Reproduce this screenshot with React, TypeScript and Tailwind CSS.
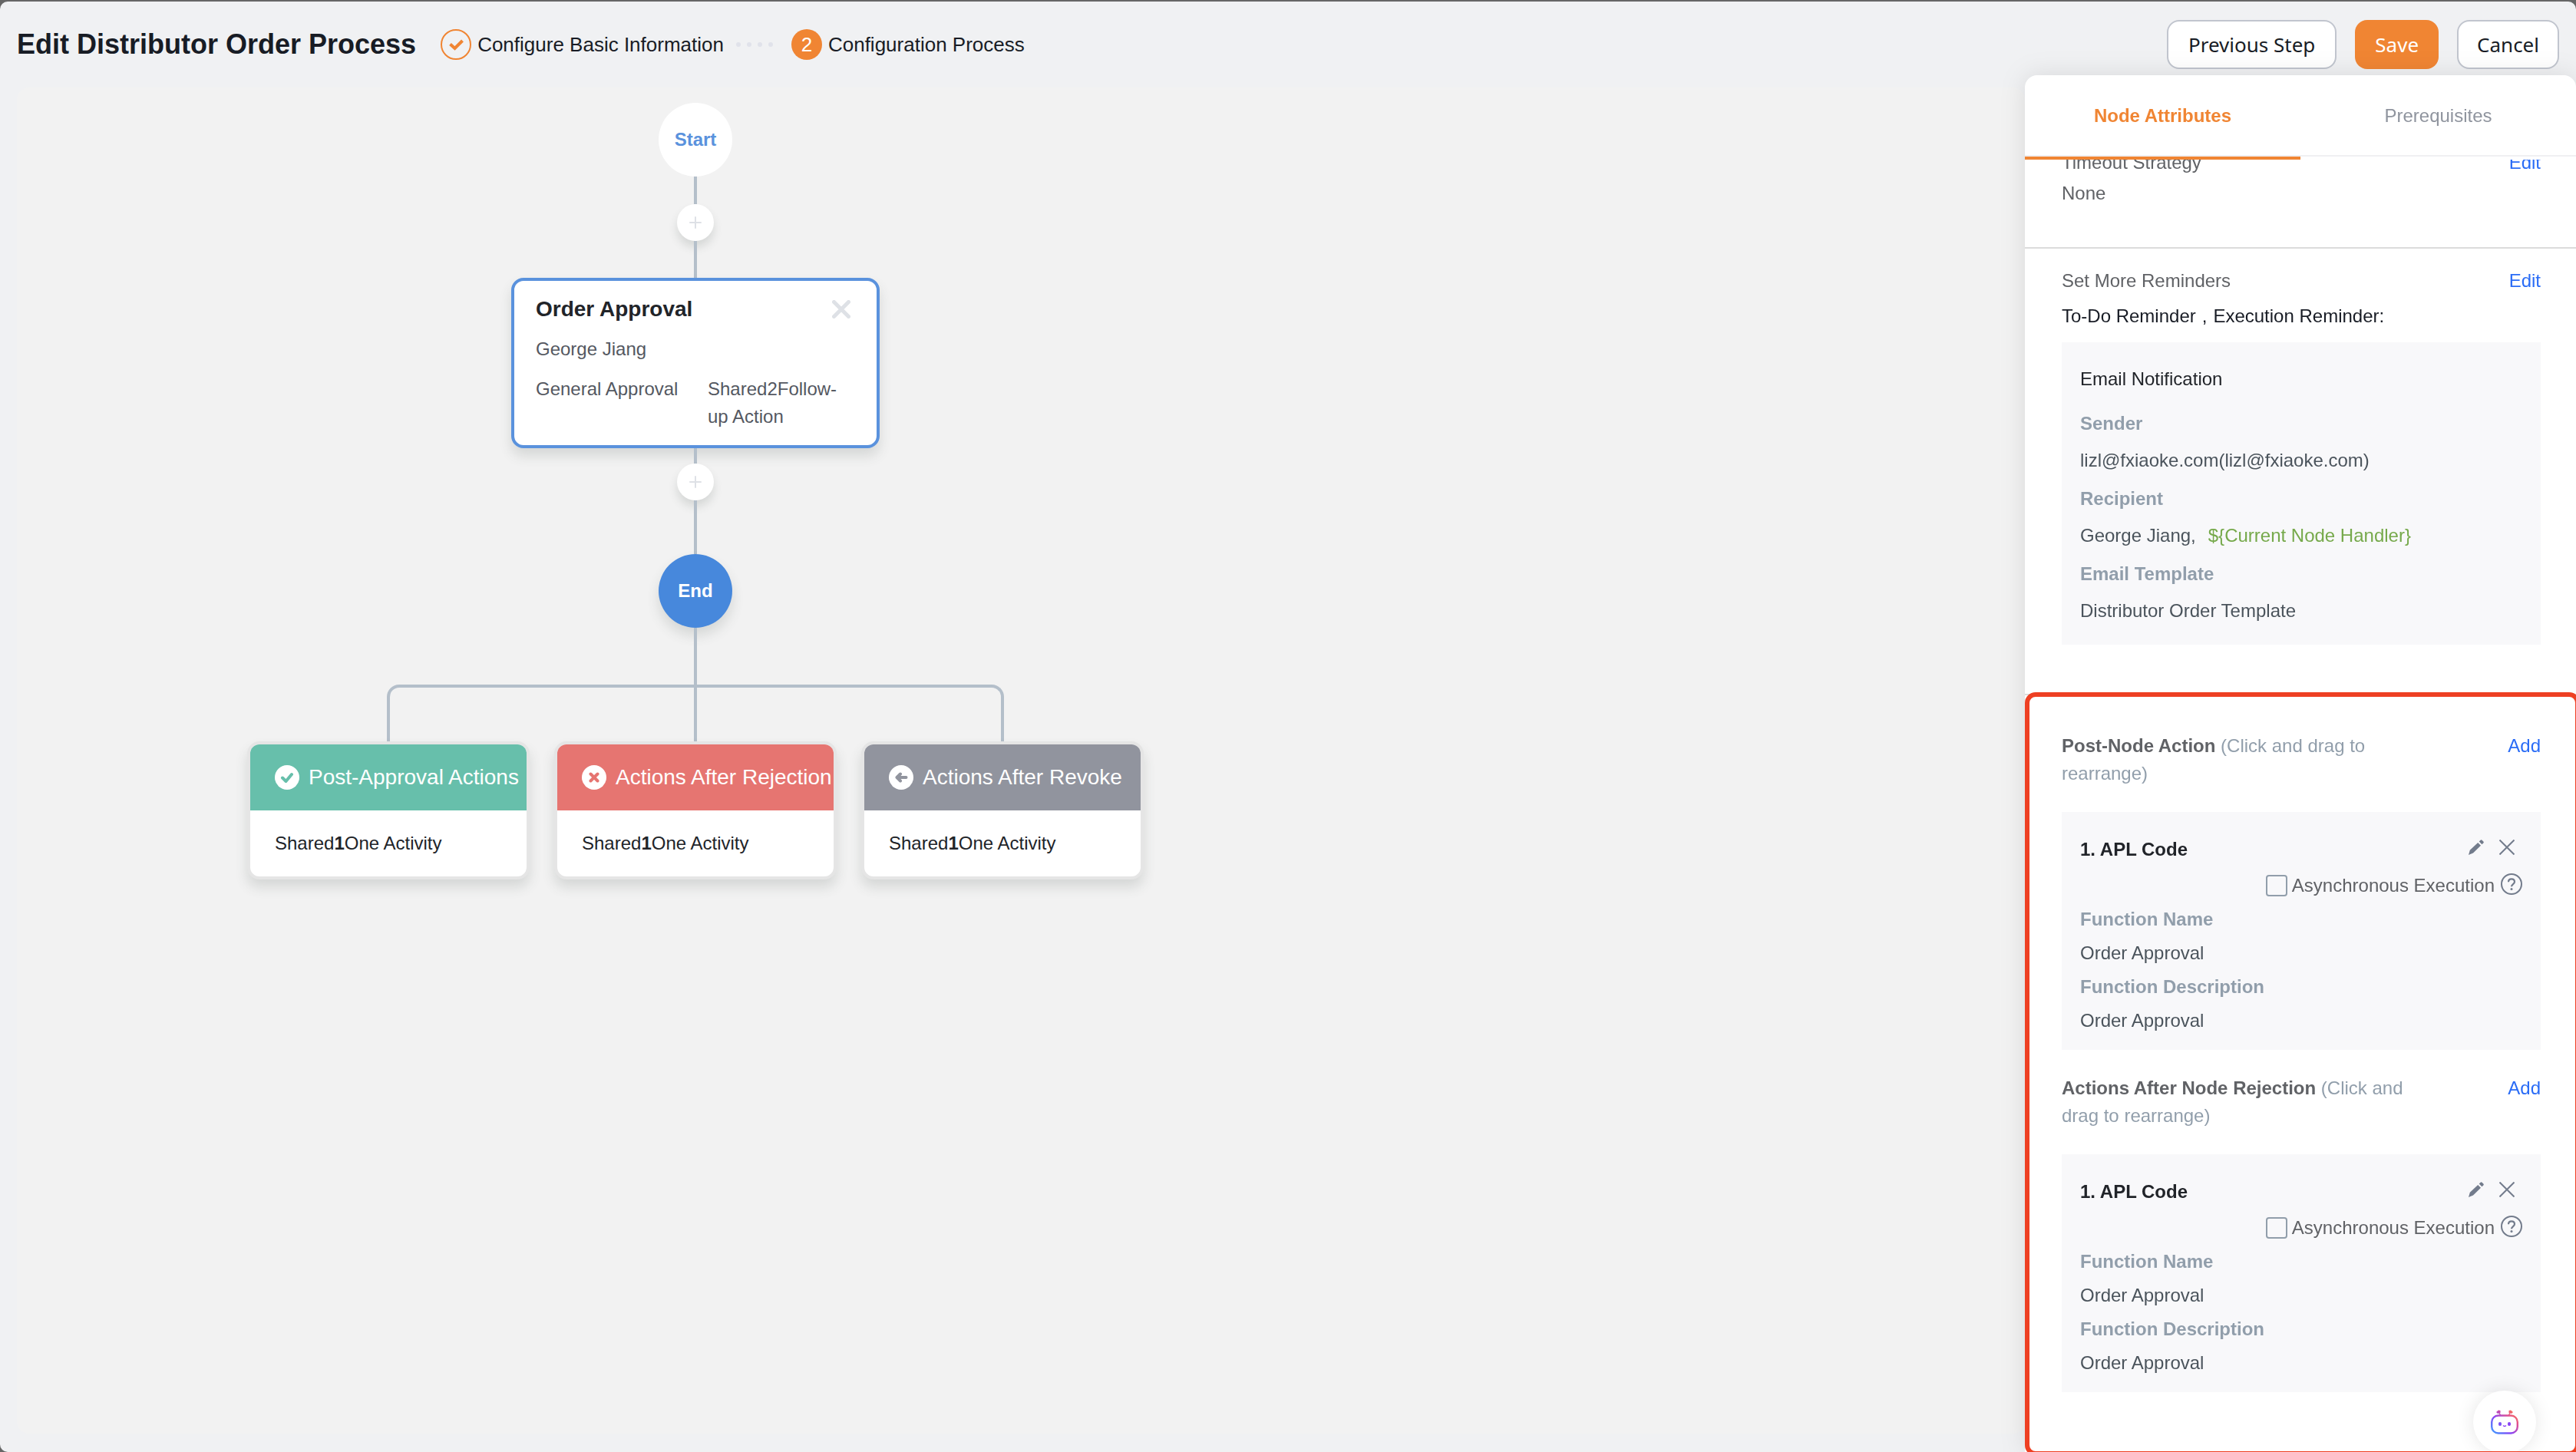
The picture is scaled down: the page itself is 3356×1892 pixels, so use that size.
import { Plus } from 'lucide-react';

const steps = {
  done: 'Configure Basic Information',
  current: 'Configuration Process',
};

const outcomes = [
  { title: 'Post-Approval Actions', header: 'bg-[#67bfab]', stroke: '#67bfab', icon: 'M10 16.5l4.5 4.5L22 12' },
  { title: 'Actions After Rejection', header: 'bg-[#e67571]', stroke: '#e67571', icon: 'M11.5 11.5l9 9M20.5 11.5l-9 9' },
  { title: 'Actions After Revoke', header: 'bg-[#91949e]', stroke: '#91949e', icon: 'M22.5 16H11M15 11.5L10.5 16l4.5 4.5' },
];

const nodeActions = [
  { id: 'post-node', title: 'Post-Node Action' },
  { id: 'node-rejection', title: 'Actions After Node Rejection' },
];

function EditLink({ children }: { children: string }) {
  return (
    <a href="#" className="text-[#2a6cf6]">
      {children}
    </a>
  );
}

function Header() {
  return (
    <header className="flex h-28 shrink-0 items-center px-[22px] text-[26px]">
      <h1 className="text-4xl font-bold">Edit Distributor Order Process</h1>
      <ol className="ml-8 flex items-center">
        <li className="flex items-center gap-2">
          <span className="flex size-10 items-center justify-center rounded-full border-2 border-[#f08533]">
            <svg viewBox="0 0 36 36" className="size-9" fill="none" stroke="#f08533" strokeWidth="4">
              <path d="M10.5 17.5l6 5.5L26.5 13" />
            </svg>
          </span>
          {steps.done}
        </li>
        <li aria-hidden="true" className="ml-4 mr-6 flex gap-2">
          <span className="size-1.5 rounded-full bg-[#e0e2ea]" />
          <span className="size-1.5 rounded-full bg-[#e0e2ea]" />
          <span className="size-1.5 rounded-full bg-[#e0e2ea]" />
          <span className="size-1.5 rounded-full bg-[#e0e2ea]" />
        </li>
        <li className="flex items-center gap-2">
          <span className="flex size-10 items-center justify-center rounded-full bg-[#f08533] text-white">2</span>
          {steps.current}
        </li>
      </ol>
      <div className="ml-auto flex gap-6 font-['Noto_Sans',sans-serif]">
        <button type="button" className="h-16 rounded-2xl border-2 border-[#c1c5ce] bg-white px-[26px]">
          Previous Step
        </button>
        <button type="button" className="h-16 rounded-2xl bg-[#f08533] px-[26px] text-white">
          Save
        </button>
        <button type="button" className="h-16 rounded-2xl border-2 border-[#c1c5ce] bg-white px-6">
          Cancel
        </button>
      </div>
    </header>
  );
}

function AddNode() {
  return (
    <button
      type="button"
      aria-label="Add node"
      className="flex size-12 items-center justify-center rounded-full bg-white text-[#dee1e6] shadow-[0_8px_12px_rgba(69,79,75,0.16)]"
    >
      <Plus className="size-6" strokeWidth={2} />
    </button>
  );
}

function ApprovalCard() {
  return (
    <div className="flex w-[480px] flex-col gap-4 rounded-2xl border-4 border-[#5a92dd] bg-white px-7 pb-[19px] pt-[19px] leading-9 text-[#545861] shadow-[0_10px_16px_rgba(69,79,75,0.16)]">
      <div className="flex h-9 items-center justify-between">
        <h2 className="text-[28px] font-bold text-[#212429]">Order Approval</h2>
        <button type="button" aria-label="Remove node" className="mr-1.5">
          <svg viewBox="0 0 24 24" className="size-6" stroke="#dee1e6" strokeWidth="5" strokeLinecap="round">
            <path d="M2.5 2.5l19 19M21.5 2.5l-19 19" />
          </svg>
        </button>
      </div>
      <p>George Jiang</p>
      <div className="flex">
        <p className="w-56 shrink-0">General Approval</p>
        <p className="min-w-0 flex-1">Shared2Follow-up Action</p>
      </div>
    </div>
  );
}

function FlowCanvas() {
  return (
    <main className="mb-6 ml-[22px] min-w-0 flex-1 rounded-2xl bg-[#f2f2f2] pl-[300px] pt-5">
      <div className="flex w-[1168px] flex-col items-center">
        <div className="flex size-24 items-center justify-center rounded-full bg-white font-bold text-[#5a92dd]">
          Start
        </div>
        <div className="h-9 w-1 bg-[#b4bfca]" />
        <AddNode />
        <div className="h-12 w-1 bg-[#b4bfca]" />
        <ApprovalCard />
        <div className="h-5 w-1 bg-[#b4bfca]" />
        <AddNode />
        <div className="h-[70px] w-1 bg-[#b4bfca]" />
        <div className="flex size-24 items-center justify-center rounded-full bg-[#4788dc] font-bold text-white shadow-[0_10px_16px_rgba(69,79,75,0.16)]">
          End
        </div>
        <div className="h-[74px] w-1 bg-[#b4bfca]" />
        <div className="flex h-[74px] w-[804px] justify-center rounded-t-2xl border-x-4 border-t-4 border-[#b4bfca]">
          <div className="w-1 bg-[#b4bfca]" />
        </div>
        <div className="flex gap-8">
          {outcomes.map((item) => (
            <section
              key={item.title}
              className="w-[368px] overflow-hidden rounded-2xl border-4 border-[#e5e5e5] bg-white shadow-[0_10px_16px_rgba(69,79,75,0.16)]"
            >
              <h3 className={`flex h-[86px] items-center gap-3 whitespace-nowrap pl-8 text-[28px] text-white ${item.header}`}>
                <svg viewBox="0 0 32 32" className="size-8 shrink-0" fill="none">
                  <circle cx="16" cy="16" r="16" fill="#fff" />
                  <path d={item.icon} stroke={item.stroke} strokeWidth="4" strokeLinecap="round" strokeLinejoin="round" />
                </svg>
                {item.title}
              </h3>
              <p className="flex h-[86px] items-center pl-8 text-[#212429]">
                Shared<b>1</b>One Activity
              </p>
            </section>
          ))}
        </div>
      </div>
    </main>
  );
}

function ActionBlock({ id, title }: { id: string; title: string }) {
  return (
    <section>
      <div className="flex justify-between leading-9">
        <p className="w-3/4 text-[#919eab]">
          <b className="text-[#606266]">{title}</b> (Click and drag to rearrange)
        </p>
        <EditLink>Add</EditLink>
      </div>
      <div className="mt-8 bg-[#f8f8fa] px-6 pb-4 pt-6">
        <div className="flex h-[50px] items-center">
          <h3 className="font-bold text-[#212429]">1. APL Code</h3>
          <div className="mb-1.5 ml-auto mr-2.5 flex gap-5">
            <button type="button" aria-label="Edit action">
              <svg viewBox="0 0 20 20" className="size-5" fill="#737c8c">
                <path d="M12.2 4l3.8 3.8L6 17.6 0 20l1.8-6.2zM13.7 2.6L15.6.7Q16.6-.3 17.6.7l1.7 1.7q1 1 0 2L17.4 6.3z" />
              </svg>
            </button>
            <button type="button" aria-label="Remove action">
              <svg viewBox="0 0 20 20" className="size-5" stroke="#737c8c" strokeWidth="2">
                <path d="M.5.5l19 19M19.5.5l-19 19" />
              </svg>
            </button>
          </div>
        </div>
        <div className="flex h-11 items-center justify-end text-[#606266]">
          <input
            id={id}
            type="checkbox"
            className="mr-1.5 size-7 appearance-none rounded-sm border-2 border-[#919eab]"
          />
          <label htmlFor={id}>Asynchronous Execution</label>
          <button type="button" aria-label="Help" className="mb-1 ml-2">
            <svg viewBox="0 0 28 28" className="size-7" fill="none" stroke="#737c8c" strokeWidth="2">
              <circle cx="14" cy="14" r="13" />
              <path d="M10 11.2C10 9 11.6 7.4 14 7.4s4 1.500 4 3.600c0 3-4 3.200-4 6.200" strokeWidth="2.2" />
              <circle cx="14" cy="20.5" r="1.5" fill="#737c8c" stroke="none" />
            </svg>
          </button>
        </div>
        <dl className="leading-[44px]">
          <dt className="font-bold text-[#919eab]">Function Name</dt>
          <dd className="text-[#4b545c]">Order Approval</dd>
          <dt className="font-bold text-[#919eab]">Function Description</dt>
          <dd className="text-[#4b545c]">Order Approval</dd>
        </dl>
      </div>
    </section>
  );
}

function AttributesPanel() {
  return (
    <aside className="relative -mt-4 flex w-[718px] shrink-0 flex-col overflow-hidden rounded-t-2xl bg-white">
      <div role="tablist" className="grid h-[106px] shrink-0 grid-cols-2 border-b-2 border-[#f0f0f2] pt-0.5">
        <button type="button" role="tab" aria-selected="true" className="font-bold text-[#f08533]">
          Node Attributes
        </button>
        <button type="button" role="tab" aria-selected="false" className="text-[#8f949e]">
          Prerequisites
        </button>
      </div>
      <div className="h-1 w-1/2 shrink-0 bg-[#f08533]" />

      <div className="flex min-h-0 flex-1 flex-col overflow-hidden">
        <section className="-mt-3.5 border-b-2 border-[#dcdcdc] pb-[52px] pl-12 pr-[46px] leading-9 text-[#606266]">
          <div className="flex justify-between">
            <h2>Timeout Strategy</h2>
            <EditLink>Edit</EditLink>
          </div>
          <p className="mt-1">None</p>
        </section>

        <section className="border-b-2 border-[#dcdcdc] pb-16 pl-12 pr-[46px] pt-6 leading-9">
          <div className="flex justify-between text-[#606266]">
            <h2>Set More Reminders</h2>
            <EditLink>Edit</EditLink>
          </div>
          <p className="mt-2.5">
            To-Do Reminder<span className="mx-2">,</span>Execution Reminder:
          </p>
          <div className="mt-4 bg-[#f8f8fa] px-6 pb-5 pt-[30px]">
            <h3 className="mb-4 text-[#212429]">Email Notification</h3>
            <dl className="leading-[48px] text-[#4b545c]">
              <dt className="font-bold text-[#919eab]">Sender</dt>
              <dd className="mb-0.5">lizl@fxiaoke.com(lizl@fxiaoke.com)</dd>
              <dt className="font-bold text-[#919eab]">Recipient</dt>
              <dd className="mb-0.5 flex gap-4">
                <span>George Jiang,</span>
                <span className="text-[#76a94b]">{'${Current Node Handler}'}</span>
              </dd>
              <dt className="font-bold text-[#919eab]">Email Template</dt>
              <dd>Distributor Order Template</dd>
            </dl>
          </div>
        </section>

        <div className="relative flex-1">
          <div className="flex flex-col gap-8 pl-12 pr-[46px] pt-12">
            {nodeActions.map((action) => (
              <ActionBlock key={action.id} id={action.id} title={action.title} />
            ))}
          </div>
          <AssistantButton />
          {/* highlight frame, runs past the right and bottom edges */}
          <div className="pointer-events-none absolute -bottom-[5px] -right-[5px] -top-1 left-0 rounded-[14px] border-[6px] border-[#ee4023]" />
        </div>
      </div>
    </aside>
  );
}

function AssistantButton() {
  return (
    <button
      type="button"
      aria-label="Assistant"
      className="absolute -bottom-0.5 right-[52px] flex size-[82px] items-center justify-center rounded-full bg-white shadow-[0_0_24px_rgba(0,0,0,0.1)]"
    >
      <svg viewBox="0 0 36 32" className="h-8 w-9" fill="none">
        <defs>
          <linearGradient id="bot" x1="4" y1="32" x2="32" y2="2" gradientUnits="userSpaceOnUse">
            <stop offset="0" stopColor="#3f9bff" />
            <stop offset="0.4" stopColor="#8a46f5" />
            <stop offset="0.75" stopColor="#e0508f" />
            <stop offset="1" stopColor="#ff7a50" />
          </linearGradient>
        </defs>
        <rect x="1.2" y="7.5" width="33.6" height="23" rx="8.5" stroke="url(#bot)" strokeWidth="2.4" />
        <path d="M12.5 7L10.5 3M23.5 7l2-4" stroke="url(#bot)" strokeWidth="1.4" />
        <path d="M7 3l3-2.5 2.5.5v3L9 5zM29 3L26 .5l-2.5.5v3L27 5z" fill="url(#bot)" />
        <rect x="10" y="16" width="4" height="5" rx="2" fill="#7d55f5" />
        <rect x="22" y="16" width="4" height="5" rx="2" fill="#8a46f5" />
        <path d="M16 20.5q2 1.8 4 0" stroke="#8a46f5" strokeWidth="1.4" />
      </svg>
    </button>
  );
}

export default function App() {
  return (
    <div className="h-screen overflow-hidden bg-[#666666] pt-0.5">
      <div className="flex h-full flex-col overflow-hidden rounded-t-[10px] rounded-bl-[10px] bg-[#f0f1f3] font-['Liberation_Sans',Arial,sans-serif] text-2xl text-[#181c25]">
        <Header />
        <div className="flex min-h-0 flex-1">
          <FlowCanvas />
          <div className="flex shrink-0 drop-shadow-[0_0_16px_rgba(0,0,0,0.1)]">
            <AttributesPanel />
          </div>
        </div>
      </div>
    </div>
  );
}
